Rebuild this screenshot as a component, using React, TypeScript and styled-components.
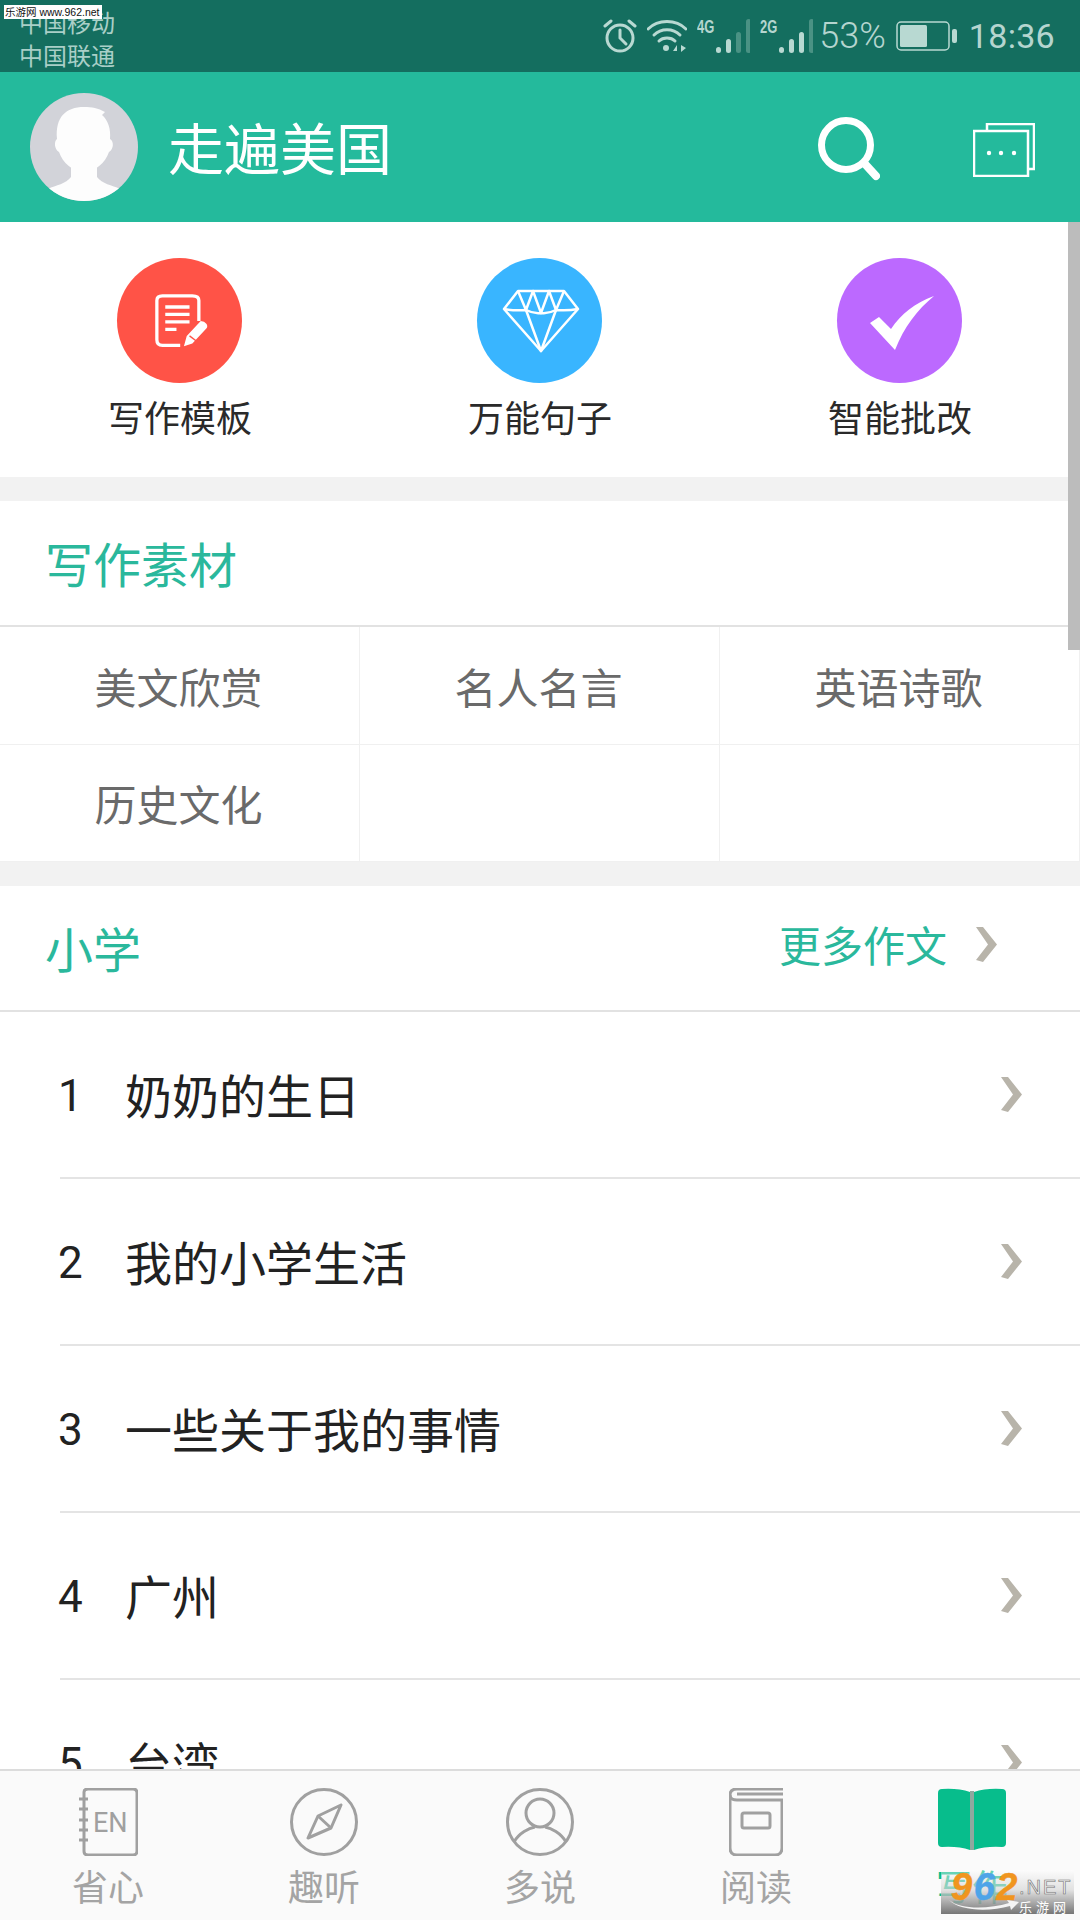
import React from 'react';
import styled, { createGlobalStyle } from 'styled-components';

const Global = createGlobalStyle`
  html, body { margin: 0; padding: 0; background: #fff; }
  #root { width: 1080px; height: 1920px; }
  * { box-sizing: border-box; }
`;

const cjk = `"Noto Sans CJK SC", "Noto Sans", sans-serif`;

const Page = styled.div`
  position: relative;
  width: 1080px;
  height: 1920px;
  display: flex;
  flex-direction: column;
  overflow: hidden;
  font-family: ${cjk};
  background: #f2f2f2;
`;

const StatusBar = styled.div`
  position: relative;
  height: 72px;
  flex: none;
  background: #146e5f;
  display: flex;
  align-items: center;
  justify-content: space-between;
  padding: 0 25px 0 19px;
  color: #b5d5cf;
`;
const Carriers = styled.div`
  display: flex;
  flex-direction: column;
  font-size: 24px;
  line-height: 33px;
  margin-top: 4px;
  color: #a9cfc7;
`;
const StatusIcons = styled.div`
  display: flex;
  align-items: center;
`;
const Percent = styled.span`
  font-family: Roboto, sans-serif;
  font-size: 36px;
  line-height: 40px;
  font-weight: 300;
  margin-left: 6px;
`;
const Clock = styled.span`
  font-family: Roboto, sans-serif;
  font-size: 34px;
  line-height: 40px;
  font-weight: 400;
  margin-left: 12px;
  letter-spacing: 0.3px;
`;
const StatusSvg = styled.svg<{ $ml?: number }>`
  display: block;
  flex: none;
  margin-left: ${p => p.$ml ?? 0}px;
`;
const SiteTag = styled.div`
  position: absolute;
  left: 4px;
  top: 5px;
  width: 98px;
  height: 14px;
  background: #fff;
  color: #111;
  font-size: 10.5px;
  line-height: 14px;
  white-space: nowrap;
  overflow: hidden;
  padding-left: 1px;
  font-family: "Liberation Sans", ${cjk};
`;

const Header = styled.header`
  height: 150px;
  flex: none;
  background: #24ba9c;
  display: flex;
  align-items: center;
  padding: 0 45px 0 30px;
`;
const Avatar = styled.svg`
  display: block;
  flex: none;
  margin-right: 30px;
`;
const HeaderTitle = styled.div`
  flex: 1;
  font-size: 56px;
  line-height: 60px;
  margin-top: -3px;
  color: #fff;
`;
const SearchBtn = styled.svg`
  display: block;
  flex: none;
  margin-top: 3px;
`;
const WindowsBtn = styled.svg`
  display: block;
  flex: none;
  margin: 6px 0 0 93px;
`;

const Main = styled.main`
  position: relative;
  flex: 1;
  min-height: 0;
  overflow: hidden;
`;
const ScrollThumb = styled.div`
  position: absolute;
  right: 0;
  top: 0;
  width: 12px;
  height: 428px;
  background: #bcbcbc;
  z-index: 2;
`;
const Quick = styled.section`
  height: 255px;
  background: #fff;
  display: grid;
  grid-template-columns: repeat(3, 1fr);
  padding-top: 36px;
`;
const QuickItem = styled.div`
  display: flex;
  flex-direction: column;
  align-items: center;
`;
const QuickCircle = styled.div<{ $c: string }>`
  width: 125px;
  height: 125px;
  border-radius: 50%;
  background: ${p => p.$c};
  display: flex;
  align-items: center;
  justify-content: center;
  margin-right: 2px;
`;
const QuickGlyph = styled.svg<{ $dx: number; $dy?: number }>`
  display: block;
  flex: none;
  margin: ${p => p.$dy ?? 0}px 0 0 ${p => p.$dx}px;
`;
const QuickLabel = styled.div`
  font-size: 36px;
  line-height: 50px;
  margin-top: 8px;
  color: #2a2a2a;
`;
const SectionHead = styled.div`
  margin-top: 24px;
  height: 126px;
  background: #fff;
  border-bottom: 2px solid #e2e2e2;
  display: flex;
  align-items: center;
  justify-content: space-between;
  padding: 0 83px 0 45px;
`;
const SectionTitle = styled.div`
  font-size: 48px;
  line-height: 60px;
  margin-top: -2px;
  color: #2ab89c;
`;
const MoreLink = styled.div`
  display: flex;
  align-items: center;
  font-size: 42px;
  line-height: 50px;
  color: #2ab89c;
  margin-top: -8px;
`;
const Grid = styled.div`
  display: grid;
  grid-template-columns: repeat(3, 360px);
  grid-auto-rows: 117.5px;
  background: #fff;
`;
const Cell = styled.div`
  border-right: 1px solid #f0f0f0;
  border-bottom: 1px solid #f0f0f0;
  display: flex;
  align-items: center;
  justify-content: center;
  font-size: 42px;
  padding-right: 2px;
  color: #6a6a6a;
`;
const List = styled.div`
  background: #fff;
`;
const Row = styled.div`
  margin-left: 60px;
  height: 167px;
  border-bottom: 2px solid #e4e4e4;
  display: flex;
  align-items: center;
  padding-right: 58px;
  font-size: 47px;
  color: #222;
`;
const RowNum = styled.span`
  width: 68px;
  flex: none;
  margin: 3px 0 0 -2px;
  font-family: Roboto, sans-serif;
  font-size: 44px;
  font-weight: 400;
`;
const RowTitle = styled.span`
  flex: 1;
  margin: -3px 0 0 -1px;
`;
const Chevron = styled.svg<{ $ml?: number }>`
  display: block;
  flex: none;
  margin-left: ${p => p.$ml ?? 0}px;
`;

const TabBar = styled.nav`
  position: relative;
  height: 151px;
  flex: none;
  background: #fafafa;
  border-top: 2px solid #dcdcdc;
  display: grid;
  grid-template-columns: repeat(5, 1fr);
`;
const Tab = styled.div<{ $active?: boolean }>`
  display: flex;
  flex-direction: column;
  align-items: center;
  padding-top: 17px;
  color: ${p => (p.$active ? '#07bd8c' : '#a4a4a4')};
`;
const TabIcon = styled.svg<{ $h?: number }>`
  display: block;
  flex: none;
  margin-bottom: ${p => 68 - (p.$h ?? 68)}px;
`;
const TabLabel = styled.div`
  font-size: 36px;
  line-height: 44px;
  margin-top: 7px;
`;
const Stamp = styled.div`
  position: absolute;
  left: 941px;
  top: 99px;
  width: 133px;
  height: 44px;
  background: linear-gradient(180deg, rgba(255,255,255,.35) 0%, rgba(215,215,215,.7) 45%, #767676 100%);
  overflow: hidden;
  display: flex;
`;
const StampLeft = styled.div`
  width: 78px;
  flex: none;
  position: relative;
`;
const StampNum = styled.div`
  font-family: "Liberation Sans", sans-serif;
  font-weight: 700;
  font-style: italic;
  font-size: 38px;
  line-height: 34px;
  letter-spacing: 1.5px;
  color: #f0951f;
  margin-left: 10px;
  white-space: nowrap;
  -webkit-text-stroke: 0.5px #f0951f;
`;
const StampBlue = styled.span`
  color: #4ea4e8;
  -webkit-text-stroke: 0.5px #4ea4e8;
`;
const Swoosh = styled.svg`
  position: absolute;
  left: 6px;
  top: 27px;
`;
const StampSide = styled.div`
  display: flex;
  flex-direction: column;
  align-items: flex-start;
  flex: 1;
  color: #fff;
`;
const StampNet = styled.div`
  font-family: "Liberation Sans", sans-serif;
  font-size: 20px;
  line-height: 22px;
  letter-spacing: 2px;
  padding-top: 6px;
  color: #f4f4f4;
  -webkit-text-stroke: 0.6px #6f6f6f;
`;
const StampCn = styled.div`
  font-size: 13px;
  line-height: 15px;
  letter-spacing: 4px;
  margin-top: 1px;
`;
const NetText = styled.span<{ $ml: number }>`
  font-family: "Liberation Sans", sans-serif;
  font-weight: 700;
  font-size: 18px;
  line-height: 16px;
  width: 18px;
  margin-left: ${p => p.$ml}px;
  margin-top: -19px;
  transform: scaleX(0.72);
  transform-origin: left center;
  white-space: nowrap;
`;

const Arrow = ({ ml }: { ml?: number }) => (
  <Chevron $ml={ml} width="22" height="35" viewBox="0 0 22 35">
    <path d="M1 0 L8 0 L22 17.5 L8 35 L1 33 L13 17.5 Z" fill="#b8b4aa" />
  </Chevron>
);

const Bars = ({ lit }: { lit: number }) => (
  <StatusSvg width="35" height="34" viewBox="0 0 35 34">
    {[0, 1, 2, 3].map(i => (
      <rect
        key={i}
        x={i * 10 + 1}
        y={[28, 20, 13, 0][i]}
        width="5"
        height={[6, 14, 21, 34][i]}
        rx="2.5"
        fill={i < lit ? '#b8d9d2' : '#4a9284'}
      />
    ))}
  </StatusSvg>
);

export default function App() {
  return (
    <Page>
      <Global />
      <StatusBar>
        <Carriers>
          <span>中国移动</span>
          <span>中国联通</span>
        </Carriers>
        <StatusIcons>
          <StatusSvg width="34" height="34" viewBox="0 0 34 34" fill="none" stroke="#b8d9d2" strokeWidth="3">
            <circle cx="17" cy="19" r="13" />
            <path d="M17 11 V19 L23 25" strokeLinecap="round" />
            <path d="M2 7 L8 2 M32 7 L26 2" strokeLinecap="round" />
          </StatusSvg>
          <StatusSvg $ml={10} width="40" height="34" viewBox="0 0 40 34" fill="none" stroke="#b8d9d2" strokeWidth="3" strokeLinecap="round">
            <path d="M1 10 C11 0 29 0 39 10" />
            <path d="M7 16 C14 9 26 9 33 16" />
            <path d="M12 22 C16 18 24 18 28 22" />
            <circle cx="19" cy="29" r="3" fill="#b8d9d2" stroke="none" />
            <path d="M26 32 L30 26 V32 Z M34 26 V33 L39 29 Z" fill="#b8d9d2" stroke="none" />
          </StatusSvg>
          <NetText $ml={10}>4G</NetText>
          <Bars lit={2} />
          <NetText $ml={10}>2G</NetText>
          <Bars lit={3} />
          <Percent>53%</Percent>
          <StatusSvg $ml={10} width="61" height="30" viewBox="0 0 61 30" fill="none">
            <rect x="1" y="1" width="52" height="28" rx="4" stroke="#b8d9d2" strokeWidth="1.5" />
            <rect x="4" y="4" width="27" height="22" rx="1.5" fill="#b8d9d2" />
            <rect x="56" y="8" width="5" height="14" rx="2" fill="#b8d9d2" />
          </StatusSvg>
          <Clock>18:36</Clock>
        </StatusIcons>
        <SiteTag>乐游网 www.962.net</SiteTag>
      </StatusBar>

      <Header>
        <Avatar width="108" height="108" viewBox="0 0 108 108">
          <defs>
            <clipPath id="av">
              <circle cx="54" cy="54" r="54" />
            </clipPath>
          </defs>
          <circle cx="54" cy="54" r="54" fill="#d2d3d9" />
          <g clipPath="url(#av)" fill="#fdfdfd">
            <path d="M27 46 C25 24 36 14 54 14 C62 14 68 15 75 19 L72 22 C78 27 81 36 80 46 C84 48 84 56 79 59 C75 70 66 78 54 79 C42 78 33 70 29 59 C24 56 24 48 27 46 Z" />
            <path d="M41 70 L41 84 C36 91 26 92 18 96 L30 115 L80 115 L90 96 C82 92 72 91 67 84 L67 70 Z" />
          </g>
        </Avatar>
        <HeaderTitle>走遍美国</HeaderTitle>
        <SearchBtn width="62" height="64" viewBox="0 0 62 64" fill="none" stroke="#fff" strokeLinecap="round">
          <circle cx="28" cy="28" r="24.5" strokeWidth="7" />
          <path d="M47 47 L58 59" strokeWidth="8" />
        </SearchBtn>
        <WindowsBtn width="62" height="54" viewBox="0 0 62 54" fill="none" stroke="#fff" strokeWidth="2.5">
          <rect x="1" y="8" width="54" height="45" />
          <path d="M14 8 V1 H61 V46 H55" />
          <circle cx="16" cy="30" r="2.2" fill="#fff" stroke="none" />
          <circle cx="28" cy="30" r="2.2" fill="#fff" stroke="none" />
          <circle cx="41" cy="30" r="2.2" fill="#fff" stroke="none" />
        </WindowsBtn>
      </Header>

      <Main>
        <ScrollThumb />
        <Quick>
          <QuickItem>
            <QuickCircle $c="#ff5347">
              <QuickGlyph $dx={7} width="58" height="56" viewBox="0 0 62 60" fill="none" stroke="#fff" strokeWidth="3.5">
                <path d="M28 56 H9 Q3 56 3 50 V8 Q3 3 9 3 H41 Q48 3 48 8 V30" />
                <path d="M12 15 H38 M12 23 H38 M12 31 H38 M12 39 H24" strokeWidth="3.5" />
                <path d="M32 57 L35 46 L50 30 Q54 30 56 33 Q58 36 56 38 L41 54 Z" fill="#fff" stroke="none" />
                <path d="M38 46 L46 52" stroke="#ff5347" strokeWidth="1.5" />
              </QuickGlyph>
            </QuickCircle>
            <QuickLabel>写作模板</QuickLabel>
          </QuickItem>
          <QuickItem>
            <QuickCircle $c="#39b5ff">
              <QuickGlyph $dx={4} width="78" height="64" viewBox="0 0 78 64" fill="none" stroke="#fff" strokeWidth="2.5" strokeLinejoin="round">
                <path d="M16 2 H62 L76 20 L39 62 L2 20 Z" />
                <path d="M2 20 Q12 22 24 21 Q32 25 39 24 Q46 25 54 21 Q66 22 76 20" />
                <path d="M16 2 L24 21 L31 2 L39 24 L47 2 L54 21 L62 2" />
                <path d="M24 21 L39 62 L54 21" />
              </QuickGlyph>
            </QuickCircle>
            <QuickLabel>万能句子</QuickLabel>
          </QuickItem>
          <QuickItem>
            <QuickCircle $c="#bc69ff">
              <QuickGlyph $dx={6} $dy={5} width="66" height="54" viewBox="0 0 66 54">
                <path d="M1 27 L10 21 L22 33 C32 18 46 7 65 0 C48 14 35 31 26 54 Z" fill="#fff" />
              </QuickGlyph>
            </QuickCircle>
            <QuickLabel>智能批改</QuickLabel>
          </QuickItem>
        </Quick>

        <SectionHead>
          <SectionTitle>写作素材</SectionTitle>
        </SectionHead>
        <Grid>
          <Cell>美文欣赏</Cell>
          <Cell>名人名言</Cell>
          <Cell>英语诗歌</Cell>
          <Cell>历史文化</Cell>
          <Cell />
          <Cell />
        </Grid>

        <SectionHead>
          <SectionTitle>小学</SectionTitle>
          <MoreLink>
            更多作文
            <Arrow ml={28} />
          </MoreLink>
        </SectionHead>
        <List>
          {['奶奶的生日', '我的小学生活', '一些关于我的事情', '广州', '台湾'].map((t, i) => (
            <Row key={t}>
              <RowNum>{i + 1}</RowNum>
              <RowTitle>{t}</RowTitle>
              <Arrow />
            </Row>
          ))}
        </List>
      </Main>

      <TabBar>
        <Tab>
          <TabIcon width="60" height="68" viewBox="0 0 60 68" fill="none" stroke="#a0a0a0" strokeWidth="3">
            <path d="M6 4 Q6 1 10 1 H55 Q59 1 59 5 V63 Q59 67 55 67 H10 Q6 67 6 63 Z" />
            <path d="M1 11 H10 M1 21 H10 M1 32 H10 M1 42 H10 M1 52 H10" strokeWidth="3" />
            <text x="15" y="44" fontFamily="Roboto, sans-serif" fontSize="27" fill="#a0a0a0" stroke="none">EN</text>
          </TabIcon>
          <TabLabel>省心</TabLabel>
        </Tab>
        <Tab>
          <TabIcon width="68" height="68" viewBox="0 0 68 68" fill="none" stroke="#a0a0a0" strokeWidth="3">
            <circle cx="34" cy="34" r="32.5" />
            <path d="M51 17 L28 28 L18 50 L41 40 Z" strokeLinejoin="round" />
            <path d="M28 28 L41 40" />
          </TabIcon>
          <TabLabel>趣听</TabLabel>
        </Tab>
        <Tab>
          <TabIcon width="68" height="68" viewBox="0 0 68 68" fill="none" stroke="#a0a0a0" strokeWidth="3">
            <circle cx="34" cy="34" r="32.5" />
            <circle cx="34" cy="25" r="14" />
            <path d="M8 54 C13 45 23 40 29 39 M60 54 C55 45 45 40 39 39" />
          </TabIcon>
          <TabLabel>多说</TabLabel>
        </Tab>
        <Tab>
          <TabIcon width="54" height="68" viewBox="0 0 54 68" fill="none" stroke="#a0a0a0" strokeWidth="3">
            <path d="M54 1 H8 Q1 1 1 7 V60 Q1 67 8 67 H46 Q53 67 53 60 V13" />
            <path d="M54 6 H8 M54 12 H8 Q1 12 1 7" />
            <rect x="13" y="25" width="28" height="15" rx="2" />
          </TabIcon>
          <TabLabel>阅读</TabLabel>
        </Tab>
        <Tab $active>
          <TabIcon $h={62} width="68" height="62" viewBox="0 0 68 62">
            <path d="M32 4 Q20 0 4 1 Q0 1 0 5 V55 Q0 59 4 59 Q20 58 32 62 Z" fill="#07bd8c" />
            <path d="M36 4 Q48 0 64 1 Q68 1 68 5 V55 Q68 59 64 59 Q48 58 36 62 Z" fill="#07bd8c" />
            <rect x="32" y="3" width="4" height="59" fill="#8fa89f" />
          </TabIcon>
          <TabLabel>写作</TabLabel>
        </Tab>
        <Stamp>
          <StampLeft>
            <StampNum>
              9<StampBlue>6</StampBlue>2
            </StampNum>
            <Swoosh width="72" height="15" viewBox="0 0 72 15">
              <path d="M2 3 C14 13 42 12 62 6 L60 3 L72 5 L64 13 L63 9 C42 15 12 14 2 3 Z" fill="#f4f4f4" />
            </Swoosh>
          </StampLeft>
          <StampSide>
            <StampNet>.NET</StampNet>
            <StampCn>乐游网</StampCn>
          </StampSide>
        </Stamp>
      </TabBar>
    </Page>
  );
}
